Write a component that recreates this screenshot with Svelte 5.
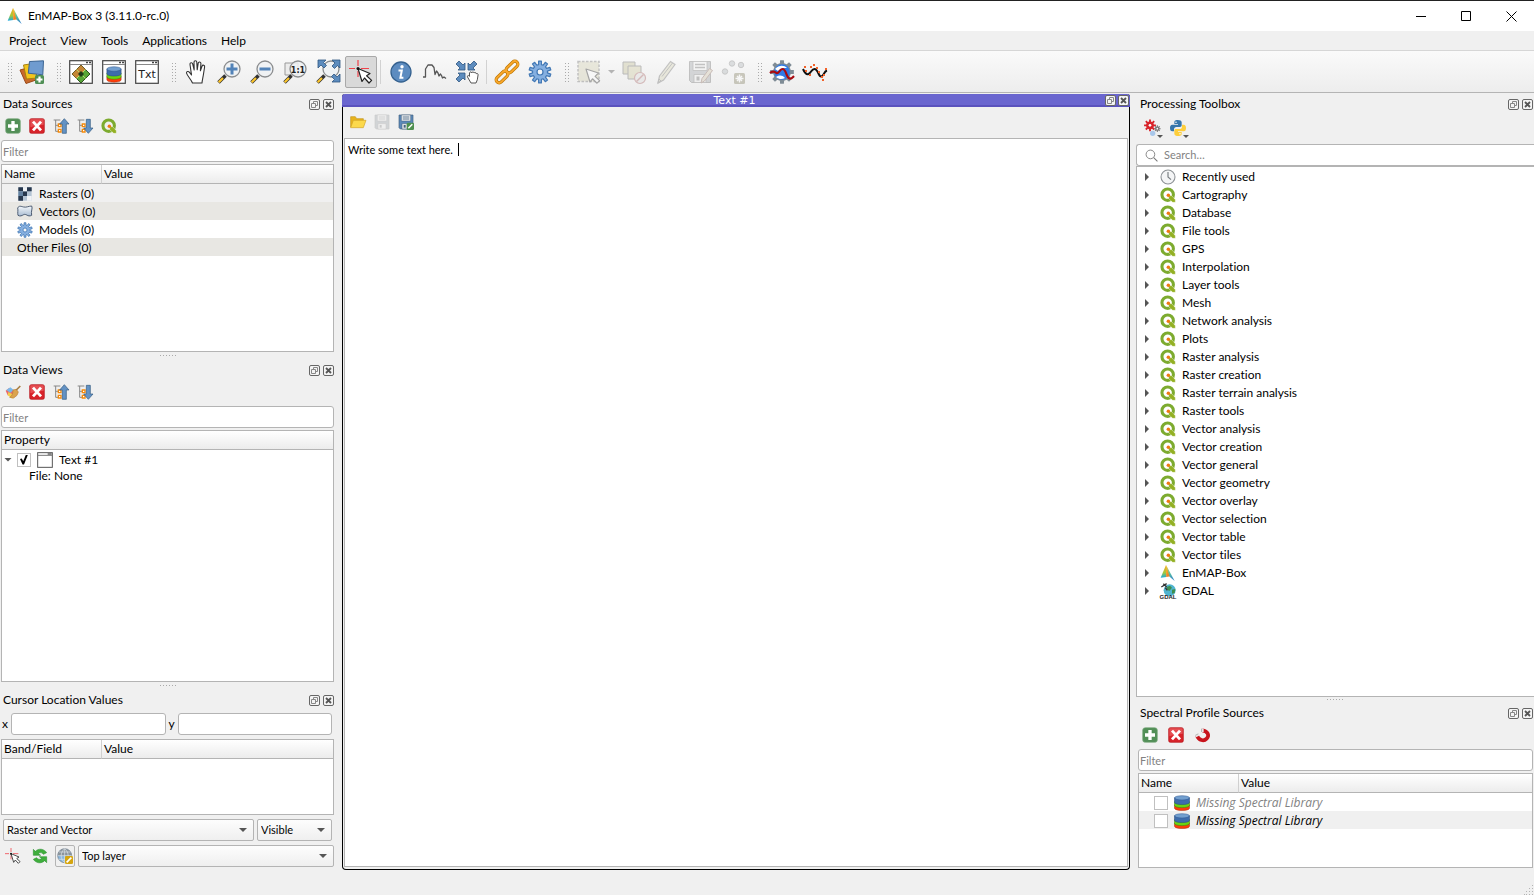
<script lang="ts">
  type Tool = { icon: string; label: string; disabled?: boolean; active?: boolean; menu?: boolean };

  const menus = ['Project', 'View', 'Tools', 'Applications', 'Help'];

  const toolbars: Tool[][][] = [
    [[{ icon: 'layers', label: 'Add data source' }]],
    [[
      { icon: 'winMap', label: 'Open map window' },
      { icon: 'winSpec', label: 'Open spectral library window' },
      { icon: 'winText', label: 'Open text window' },
    ]],
    [
      [
        { icon: 'hand', label: 'Pan' },
        { icon: 'zoomIn', label: 'Zoom in' },
        { icon: 'zoomOut', label: 'Zoom out' },
        { icon: 'zoomNative', label: 'Zoom to native resolution' },
        { icon: 'zoomFull', label: 'Zoom full' },
        { icon: 'cross', label: 'Identify cursor location', active: true },
      ],
      [
        { icon: 'info', label: 'Identify' },
        { icon: 'profile', label: 'Spectral profile' },
        { icon: 'center', label: 'Center map' },
      ],
      [
        { icon: 'link', label: 'Link maps' },
        { icon: 'gear', label: 'Settings' },
      ],
    ],
    [[
      { icon: 'select', label: 'Select features', disabled: true, menu: true },
      { icon: 'deselect', label: 'Deselect features', disabled: true },
      { icon: 'pencil', label: 'Toggle editing', disabled: true },
      { icon: 'saveEdits', label: 'Save edits', disabled: true },
      { icon: 'addPoint', label: 'Add feature', disabled: true },
    ]],
    [[
      { icon: 'specGear', label: 'Classification workflow' },
      { icon: 'specPoints', label: 'Spectral resampling' },
    ]],
  ];

  const sources = [
    { icon: 'raster', label: 'Rasters (0)' },
    { icon: 'vector', label: 'Vectors (0)' },
    { icon: 'gear', label: 'Models (0)' },
    { icon: '', label: 'Other Files (0)' },
  ];

  const groups = [
    'Recently used', 'Cartography', 'Database', 'File tools', 'GPS', 'Interpolation', 'Layer tools', 'Mesh',
    'Network analysis', 'Plots', 'Raster analysis', 'Raster creation', 'Raster terrain analysis', 'Raster tools',
    'Vector analysis', 'Vector creation', 'Vector general', 'Vector geometry', 'Vector overlay',
    'Vector selection', 'Vector table', 'Vector tiles', 'EnMAP-Box', 'GDAL',
  ];
  const groupIcons: Record<string, string> = { 'Recently used': 'clock', 'EnMAP-Box': 'logo', GDAL: 'gdal' };

  const libraries = [
    { label: 'Missing Spectral Library', muted: true },
    { label: 'Missing Spectral Library', muted: false },
  ];

  let content = $state('Write some text here. ');
  let visible = $state(true);

  // closed outline of a cog wheel
  function cog(cx: number, cy: number, outer: number, inner: number, teeth: number) {
    const step = (Math.PI * 2) / teeth;
    const pts: string[] = [];
    for (let i = 0; i < teeth; i++) {
      const a = i * step - Math.PI / 2;
      for (const [r, d] of [[inner, -0.3], [outer, -0.2], [outer, 0.2], [inner, 0.3]]) {
        pts.push(`${(cx + r * Math.cos(a + d * step)).toFixed(2)},${(cy + r * Math.sin(a + d * step)).toFixed(2)}`);
      }
    }
    return `M${pts.join('L')}Z`;
  }
</script>

{#snippet cylinder()}
  <path d="M4.500 14.500v4c0 4 15 4 15 0v-4z" fill="#ff3c0a" stroke="#a83010" stroke-width=".6" />
  <path d="M4.500 10v4.800c0 4 15 4 15 0v-4.800z" fill="#6bd410" stroke="#3c8010" stroke-width=".6" />
  <path d="M4.500 5v5.800c0 4 15 4 15 0v-5.800z" fill="#3d6cac" stroke="#284b7c" stroke-width=".6" />
  <ellipse cx="12" cy="5" rx="7.500" ry="2.800" fill="#729fcf" stroke="#315a92" stroke-width=".6" />
{/snippet}

{#snippet win()}
  <rect x=".7" y=".7" width="22.600" height="22.600" fill="#fff" stroke="#444" stroke-width="1.200" />
  <path d="M1 4.500h22" stroke="#888" />
  <path d="M17 2.500h2M20 2.500h2" stroke="#444" stroke-width="1.500" />
{/snippet}

{#snippet lens()}
  <path d="M8.500 15.500L1.500 22.500" stroke="#333" stroke-width="3.600" />
  <path d="M6 18L1.700 22.300" stroke="#fcc52b" stroke-width="2.200" />
  <circle cx="15" cy="9" r="8" fill="#eef1f3" fill-opacity=".85" stroke="#8b8d8f" stroke-width="1.300" />
{/snippet}

{#snippet pointer()}
  <path d="M9 9l4 13 2.500-3.200 4.500 4.400 2.600-2.600-4.500-4.200L21.500 13z" fill="#fff" stroke="#333" stroke-width="1.200" stroke-linejoin="round" />
{/snippet}

{#snippet floppy(body: string, dark: string)}
  <path d="M1.500 1.500h21v21h-19l-2-2z" fill={body} stroke={dark} />
  <path d="M5 1.500h14v9H5z" fill="#f2f2f2" stroke={dark} stroke-width=".8" />
  <path d="M7 4.500h10M7 7.500h10" stroke={dark} stroke-width="1.300" />
  <path d="M6 14.500h12v8H6z" fill="#ececec" stroke={dark} stroke-width=".8" />
  <path d="M8.500 16.500h3v4h-3z" fill={dark} />
{/snippet}

{#snippet tree()}
  <path d="M1 3h10M4 3v17h6M4 11h6" fill="none" stroke="#888" stroke-width="1.500" />
  <path d="M8 9h4v4H8zM8 17h4v4H8z" fill="#fff" stroke="#f58a0b" stroke-width="2" />
{/snippet}

{#snippet icon(name: string, size: number)}
  <svg class="icon" width={size} height={size} viewBox="0 0 24 24" fill="none" aria-hidden="true">
    {#if name === 'logo'}
      <path d="M9 0L1 19l8.500-1z" fill="url(#logoA)" />
      <path d="M9 0l.3 18 6.700-1z" fill="url(#logoB)" />
      <path d="M9 0L22 24l-7.500-6.500z" fill="url(#logoC)" />
    {:else if name === 'layers'}
      <path d="M0 10l11-3 5 13-10 3.500z" fill="#c9692c" stroke="#9a4a18" />
      <path d="M3.500 5l13-2v15l-10 1z" fill="#f3c51c" stroke="#a8820e" />
      <path d="M9.500 1.500L23.500 .8l-.7 14-14.500-1.600z" fill="#6f9bcf" stroke="#3c6593" />
      <rect x="15" y="15" width="9" height="9" rx="1.500" fill="#4f8f55" />
      <path d="M19.500 16.500v6M16.500 19.500h6" stroke="#fff" stroke-width="2.200" />
    {:else if name === 'winMap'}
      {@render win()}
      <path d="M12 5l9 9-9 9-9-9z" fill="#58a637" stroke="#2d5020" />
      <path d="M12 5l4.500 4.500L12 14l-4.500-4.500zM3 14l4.500 4.500L12 14 7.500 9.500z" fill="#e87b35" fill-opacity=".75" />
      <path d="M12 11l3 3-3 3-3-3z" fill="#203b18" />
      <path d="M7.500 9.500l2.500 2.500M16.500 9.500L14 12M7.500 18.500L10 16M16.500 18.500L14 16" stroke="#b9d86c" />
    {:else if name === 'winSpec'}
      {@render win()}
      <g transform="translate(.6 5) scale(.95 .8)">{@render cylinder()}</g>
    {:else if name === 'winText'}
      {@render win()}
      <text x="12" y="17.500" text-anchor="middle" class="glyph txt">Txt</text>
    {:else if name === 'win'}
      <rect x="1" y="1" width="22" height="22" fill="#fff" stroke="#555" stroke-width="1.500" />
      <path d="M1 5h22" stroke="#777" stroke-width="1.500" />
      <path d="M16 3h6" stroke="#555" stroke-width="2" />
    {:else if name === 'hand'}
      <path d="M8.500 23c-1-3-5.500-7.500-6-10-.2-1.600 1.900-2 3-.6l2 2.600L6 4.500c-.3-2 2.200-2.400 2.700-.5l1.500 6L10 2.200c0-2 2.700-2 2.800 0l.4 7.600 1-6.600c.3-1.900 2.800-1.500 2.700.3l-.5 7.300 1.600-4.600c.7-1.800 3-1 2.600.8L19.500 14c-.4 3-1.200 5.500-1.500 9z" fill="#fff" stroke="#333" stroke-width="1.100" stroke-linejoin="round" />
    {:else if name === 'zoomIn'}
      {@render lens()}
      <path d="M15 3.500v11M9.500 9h11" stroke="#5383b8" stroke-width="3" />
    {:else if name === 'zoomOut'}
      {@render lens()}
      <path d="M9.500 9h11" stroke="#5383b8" stroke-width="3" />
    {:else if name === 'zoomNative'}
      <path d="M2 3h13v12H2z" fill="#ececec" stroke="#999" />
      {@render lens()}
      <text x="15" y="12.500" text-anchor="middle" class="glyph ratio">1:1</text>
    {:else if name === 'zoomFull'}
      {@render lens()}
      <path d="M2 0h8L7.500 2.500l3 3-2.500 2.500-3-3L2 8zM24 0v8l-2.500-2.500-3 3L16 6l3-3-3-3zM24 22h-8l2.500-2.500-3-3L18 14l3 3 3-3z" fill="#5d8cbe" stroke="#2f5680" stroke-width=".8" />
    {:else if name === 'cross'}
      <path d="M9 0v6M9 11v6M0 8.500h6M12 8.500h8" stroke="#f0444c" stroke-width="1.200" />
      <path d="M9 8.500l4 13 2.500-3.500 4.500 5 2.600-2.600-5-4.600 3.400-2.300z" fill="#fff" stroke="#222" stroke-width="1.200" stroke-linejoin="round" />
      <circle cx="9" cy="8.500" r="1.500" fill="#111" />
    {:else if name === 'info'}
      <circle cx="12" cy="12" r="10" fill="#5d8cc0" stroke="#34618f" stroke-width="1.300" />
      <circle cx="13" cy="6.800" r="1.700" fill="#fff" />
      <path d="M9.500 10.500h3.300l-1.400 7.300h3" stroke="#fff" stroke-width="2" />
    {:else if name === 'profile'}
      <path d="M1 17h2.500V9L6 5h4l2 2.500 1 7 1.500-3.500 1.500 2 1 3 1.500-2 1 1.500 1 2.500 1.500-1 2 1.500" stroke="#555" stroke-width="1.300" stroke-linejoin="round" />
    {:else if name === 'center'}
      <path d="M10 10H3l2-2-4-4 3-3 4 4 2-2zM13 10V3l2 2 4-4 3 3-4 4 2 2zM10 13v7l-2-2-4 4-3-3 4-4-2-2z" fill="#5d8cbe" stroke="#2f5680" stroke-width=".8" />
      <path d="M16 23l-3.500-6c-.5-1.500 1-2 2-.6V13c.3-1.500 2-1.500 2.200 0 .4-1.500 2.200-1.300 2.300 0 .8-1 2.200-.6 2.200.8.8-.7 2-.3 1.900 1l-.8 5L21 23z" fill="#fff" stroke="#555" />
    {:else if name === 'link'}
      <g stroke="#bd7700" stroke-width="3.200">
        <rect x="-7" y="-3" width="14" height="6" rx="3" transform="translate(17 7) rotate(-45)" />
        <rect x="-7" y="-3" width="14" height="6" rx="3" transform="translate(7 17) rotate(-45)" />
      </g>
      <g stroke="#f9a72b" stroke-width="1.800">
        <rect x="-7" y="-3" width="14" height="6" rx="3" transform="translate(17 7) rotate(-45)" />
        <rect x="-7" y="-3" width="14" height="6" rx="3" transform="translate(7 17) rotate(-45)" />
      </g>
    {:else if name === 'gear'}
      <path d={cog(12, 12, 11, 7.5, 10)} fill="#85afe0" stroke="#4278b5" stroke-width="1.200" stroke-linejoin="round" />
      <circle cx="12" cy="12" r="3" fill="#f4f6f8" stroke="#4278b5" stroke-width="1.200" />
    {:else if name === 'select'}
      <path d="M1 1.500h21v20H1z" fill="#d4d1b4" stroke="#777" stroke-width="1.500" stroke-dasharray="2.500 1.500" />
      {@render pointer()}
    {:else if name === 'deselect'}
      <path d="M1 2h12v12H1z" fill="#c4c098" stroke="#666" />
      <path d="M6 6h13v13H6z" fill="#d0cca4" stroke="#666" />
      <circle cx="18" cy="18" r="5.500" fill="#ddd" stroke="#a66" stroke-width="1.200" />
      <path d="M14.500 21.500l7-7" stroke="#a66" stroke-width="1.500" />
    {:else if name === 'pencil'}
      <path d="M3 23l1.500-7L15.500 1.500l4.500 3L8.500 20z" fill="#d8d6b8" stroke="#777" stroke-width="1.200" />
      <path d="M7 16.500L17.500 3M3 23l1-4 2 2z" stroke="#777" />
    {:else if name === 'saveEdits'}
      {@render floppy('#a4a8ac', '#777')}
      <path d="M13 23l1-4.500 7.500-10 3 2L16.500 21z" fill="#d3c9b2" stroke="#8b6b60" />
    {:else if name === 'addPoint'}
      <g fill="#b3b9bc" stroke="#888"><circle cx="4" cy="11.500" r="2.700" /><circle cx="11" cy="3.500" r="2.700" /><circle cx="20" cy="5" r="2.700" /></g>
      <rect x="13" y="13" width="11" height="11" rx="1.500" fill="#8a866a" />
      <path d="M18.500 14.500v8M14.500 18.500h8M16 16l5 5M21 16l-5 5" stroke="#fff" stroke-width="1.400" />
    {:else if name === 'specGear'}
      <path d={cog(12, 12, 12, 9, 8)} fill="#7f8c96" />
      <circle cx="12" cy="12" r="7.800" fill="#2f7be8" />
      <path d="M5 9c4-4 9-4 12-1-4-.5-7 .5-9 3zM6 17c3-2 6-2 9 1-3 1.500-6 1.500-9-1z" fill="#fff" />
      <path d="M0 13c3-3 5-1 6.500 0 2.500 1 3-4 6-4 4 0 3.500 8.500 7 9.500 2 .5 3-1 4.500-2.500" stroke="#a80a10" stroke-width="2.200" />
    {:else if name === 'specPoints'}
      <path d="M0 9c1.500 3.500 3 6 5.500 5 3-1.500 3-5 6-5 3.500 0 4 7.500 6.500 7.500 3 0 2.500-5 6-6" stroke="#111" stroke-width="2" />
      <path d="M1 7h2M2 11h2M6 15h2M7 7h2M10 5h2M13 8h2M15 12h2M18 17h2M19 20h2M20 15h2M22 9h2" stroke="#f2622a" stroke-width="2.200" />
    {:else if name === 'add'}
      <rect x="1" y="1" width="22" height="22" rx="4" fill="#528f57" stroke="#7daa80" />
      <path d="M12 4.500v15M4.500 12h15" stroke="#fff" stroke-width="5" />
    {:else if name === 'remove'}
      <rect x="1" y="1" width="22" height="22" rx="2.500" fill="#d8232a" stroke="#b3151b" />
      <path d="M2 2h20v8c-7 1-13 1-20 4z" fill="#ee6d70" fill-opacity=".6" />
      <path d="M6 5.500l12 13M18 5.500l-12 13" stroke="#fff" stroke-width="4.200" />
    {:else if name === 'collapse'}
      {@render tree()}
      <path d="M17 1l7 8h-4v14h-6V9h-4z" fill="#6392c4" stroke="#31587f" />
    {:else if name === 'expand'}
      {@render tree()}
      <path d="M17 23l-7-8h4V2h6v13h4z" fill="#6392c4" stroke="#31587f" />
    {:else if name === 'qgis'}
      <circle cx="11.500" cy="11.500" r="8.600" stroke="#7dab2f" stroke-width="4.600" />
      <path d="M13 13h4.500l5.500 6v4h-4l-6-5.500z" fill="#93b023" stroke="#fff" stroke-width=".6" />
      <circle cx="12.500" cy="12.500" r="2.600" fill="#ee7913" />
    {:else if name === 'raster'}
      <path d="M2 2h20v20H2z" fill="#b4c4d4" />
      <path d="M2 2h7v6H2zM15 2h7v6h-7zM9 8h6v7H9zM2 15h7v7H2z" fill="#26374d" />
      <path d="M9 2h6v6H9zM15 15h7v7h-7z" fill="#f0f3f6" />
      <path d="M2 8h7v7H2z" fill="#62809f" />
    {:else if name === 'vector'}
      <path d="M1 6c2-4 5-2.500 9-1.500S18 3 22 3c2 4-1.500 7 0 14-6 3-8-3-12-1-3 1.500-5 3-8.500 1C.5 13 2 10 1 6z" fill="url(#vecFill)" stroke="#44546c" stroke-width="1.400" />
    {:else if name === 'broom'}
      <path d="M1 10l5-4 7 3-1 9-8-1z" fill="#ec6a6a" />
      <path d="M2 9l6-4 5 4-5 4z" fill="#79b8ea" />
      <path d="M5 12l9 5-3 5-7-5z" fill="#f2cf4a" />
      <path d="M12 9l5-1 3 4-2 5-5 4-6-1c4-2 5-6 5-11z" fill="#dba34e" stroke="#b98238" />
      <path d="M17 9l6-6" stroke="#a87c3e" stroke-width="2.400" />
    {:else if name === 'folder'}
      <path d="M1 20V4h7l2 3h10v3" fill="#e8b31c" stroke="#c4951a" />
      <path d="M1 20.500L5 9.500h19l-4 11z" fill="#fcd94c" stroke="#d2a527" />
    {:else if name === 'save'}
      {@render floppy('#9aa1a8', '#888')}
    {:else if name === 'saveAs'}
      {@render floppy('#5b88b8', '#44617f')}
      <rect x="13" y="13" width="11" height="11" rx="2" fill="#4f9050" />
      <path d="M15.500 21.500l6-6" stroke="#fff" stroke-width="2.200" />
    {:else if name === 'gears'}
      <path d={cog(9, 8, 9, 6, 8)} fill="#d8232a" />
      <circle cx="9" cy="8" r="2" fill="#fff" />
      <path d={cog(20, 13, 5, 3.4, 8)} fill="#777" />
      <circle cx="20" cy="13" r="1.300" fill="#fff" />
      <circle cx="13" cy="20" r="4" fill="#a9c7ea" />
    {:else if name === 'python'}
      <path d="M11.500 0C7 0 6.500 2 6.500 3.500V6H12v1H3.500C1 7 0 9 0 12s1 5 3.500 5H6v-3c0-2 1.500-3.500 3.500-3.500H15c1.500 0 2.500-1 2.500-2.500V3.500C17.500 1 15 0 11.500 0z" fill="#3776ab" />
      <path d="M12.500 24c4.500 0 5-2 5-3.500V18H12v-1h8.500c2.500 0 3.500-2 3.500-5s-1-5-3.500-5H18v3c0 2-1.500 3.500-3.500 3.500H9c-1.500 0-2.500 1-2.500 2.500v4.500c0 2.500 2.500 3.500 6 3.500z" fill="#fdce3c" />
      <circle cx="9" cy="3.500" r="1.100" fill="#fff" />
      <circle cx="15" cy="20.500" r="1.100" fill="#fff" />
    {:else if name === 'clock'}
      <circle cx="12" cy="12" r="10.500" fill="#f4f5f6" stroke="#8d9296" stroke-width="1.600" />
      <path d="M12 4.500V12l4.500 4" stroke="#777c80" stroke-width="1.700" />
    {:else if name === 'gdal'}
      <circle cx="14.500" cy="11" r="9" fill="#4fb3cf" />
      <path d="M10 6l5-2 3 3-4 5-3-2zM18 10l5-1-1 6-4 1z" fill="#3e8f4e" />
      <path d="M2 6l8-5M5 1l5 5M8 7l3 4" stroke="#333" stroke-width="2" />
      <text x="12" y="23.500" text-anchor="middle" class="glyph gdal">GDAL</text>
    {:else if name === 'library'}
      <g transform="translate(-6 -1.500) scale(1.500 1.150)">{@render cylinder()}</g>
    {:else if name === 'magnet'}
      <path d="M4.500 13c3 7 10 9 14.500 4.500S21 6 12.500 5" stroke="#c8141c" stroke-width="5.500" />
      <path d="M13 2.500v5M2.500 14l5-2.500" stroke="#e8e8e8" stroke-width="3" />
      <path d="M11.300 2.500v5M2 12.500l4.500-2.300" stroke="#999" />
    {:else if name === 'reload'}
      <path d="M2 11V2l3 3c5-5 13-4 17 2l-5 2.500c-2-3-5-3.500-7.500-1L13 11z" fill="#3fae3c" stroke="#218a25" stroke-width=".8" />
      <path d="M22 13v9l-3-3c-5 5-13 4-17-2l5-2.500c2 3 5 3.500 7.500 1L11 13z" fill="#3fae3c" stroke="#218a25" stroke-width=".8" />
    {:else if name === 'globe'}
      <circle cx="11.500" cy="11.500" r="10.500" fill="#8ab6dc" stroke="#6b7680" />
      <path d="M1 11.500a10.500 10.500 0 0 1 21 0z" fill="#8b949c" />
      <path d="M1 11.500h21M3 6h17M3 17h17M11.500 1v21M11.500 1c-7 6-7 15 0 21M11.500 1c7 6 7 15 0 21" stroke="#dfe6ec" />
      <rect x="12" y="12" width="12" height="12" rx="2" fill="#d5a510" />
      <path d="M14.500 21.500l7-7" stroke="#fff" stroke-width="2.500" />
    {:else if name === 'search'}
      <circle cx="10" cy="10" r="8" stroke="#777" stroke-width="1.600" />
      <path d="M16 16l7 7" stroke="#777" stroke-width="2" />
    {/if}
  </svg>
{/snippet}

{#snippet dockButtons()}
  <button class="dock-button" aria-label="Float">
    <svg width="11" height="11" viewBox="0 0 11 11" fill="none" stroke="#666">
      <rect x=".5" y=".5" width="10" height="10" rx="1.500" fill="#f4f4f4" />
      <path d="M4.500 4.500v-2h4v4h-2M2.500 4.500h4v4h-4z" stroke="#888" />
    </svg>
  </button>
  <button class="dock-button" aria-label="Close">
    <svg width="11" height="11" viewBox="0 0 11 11" fill="none" stroke="#666">
      <rect x=".5" y=".5" width="10" height="10" rx="1.500" fill="#f4f4f4" />
      <path d="M3 3l5 5M8 3L3 8" stroke="#555" stroke-width="1.800" />
    </svg>
  </button>
{/snippet}

{#snippet dockTitle(title: string)}
  <header class="dock-title">
    <h2>{title}</h2>
    {@render dockButtons()}
  </header>
{/snippet}

{#snippet smallTool(name: string, label: string, disabled = false)}
  <button class="small-tool" aria-label={label} {disabled}>{@render icon(name, 16)}</button>
{/snippet}

<svg class="defs" width="0" height="0" aria-hidden="true">
  <defs>
    <linearGradient id="logoA" x1="0" y1="0" x2="0" y2="1"><stop offset="0" stop-color="#f7a823" /><stop offset=".6" stop-color="#a3c93a" /><stop offset="1" stop-color="#18a9e0" /></linearGradient>
    <linearGradient id="logoB" x1="0" y1="0" x2="0" y2="1"><stop offset="0" stop-color="#f7c81f" /><stop offset="1" stop-color="#f07a24" /></linearGradient>
    <linearGradient id="logoC" x1="0" y1="0" x2="0" y2="1"><stop offset="0" stop-color="#f6c72c" /><stop offset=".5" stop-color="#5cc3a0" /><stop offset="1" stop-color="#2878d0" /></linearGradient>
    <linearGradient id="vecFill" x1="0" y1="0" x2="0" y2="1"><stop offset="0" stop-color="#f5f8fb" /><stop offset="1" stop-color="#a9bdd3" /></linearGradient>
  </defs>
</svg>

<div class="window">
  <header class="titlebar">
    {@render icon('logo', 16)}
    <h1>EnMAP-Box 3 (3.11.0-rc.0)</h1>
    <div class="window-buttons">
      <button aria-label="Minimize"><svg width="11" height="11"><path d="M0 5.500h10" stroke="#000" /></svg></button>
      <button aria-label="Maximize"><svg width="11" height="11"><path d="M.5 .5h9v9h-9z" fill="none" stroke="#000" /></svg></button>
      <button aria-label="Close"><svg width="11" height="11"><path d="M.5 .5l10 10M10.500 .5l-10 10" stroke="#000" /></svg></button>
    </div>
  </header>

  <nav class="menubar">
    {#each menus as item}
      <button>{item}</button>
    {/each}
  </nav>

  <div class="toolbar" role="toolbar" aria-label="Main">
    {#each toolbars as bar}
      <span class="handle"></span>
      {#each bar as section, i}
        {#if i > 0}<span class="separator"></span>{/if}
        {#each section as tool}
          <button class="tool" class:active={tool.active} disabled={tool.disabled} aria-label={tool.label}>
            {@render icon(tool.icon, 24)}
          </button>
          {#if tool.menu}<button class="tool-menu" aria-label="More" disabled><span class="arrow"></span></button>{/if}
        {/each}
      {/each}
    {/each}
  </div>

  <main>
    <aside class="left">
      <section class="dock sources">
        {@render dockTitle('Data Sources')}
        <div class="dock-tools">
          {@render smallTool('add', 'Add data source')}
          {@render smallTool('remove', 'Remove data source')}
          {@render smallTool('collapse', 'Collapse tree')}
          {@render smallTool('expand', 'Expand tree')}
          {@render smallTool('qgis', 'Synchronize with QGIS')}
        </div>
        <input class="filter" type="text" placeholder="Filter" aria-label="Filter data sources" />
        <div class="view">
          <table>
            <colgroup><col class="name-col" /><col /></colgroup>
            <thead><tr><th>Name</th><th>Value</th></tr></thead>
            <tbody class="striped">
              {#each sources as source}
                <tr>
                  <td colspan="2">
                    <div class="cell indent">
                      {#if source.icon}{@render icon(source.icon, 16)}{/if}
                      <span>{source.label}</span>
                    </div>
                  </td>
                </tr>
              {/each}
            </tbody>
          </table>
        </div>
      </section>

      <div class="splitter"></div>

      <section class="dock views">
        {@render dockTitle('Data Views')}
        <div class="dock-tools">
          {@render smallTool('broom', 'Style')}
          {@render smallTool('remove', 'Remove view')}
          {@render smallTool('collapse', 'Collapse tree')}
          {@render smallTool('expand', 'Expand tree')}
        </div>
        <input class="filter" type="text" placeholder="Filter" aria-label="Filter data views" />
        <div class="view">
          <table>
            <thead><tr><th>Property</th></tr></thead>
            <tbody>
              <tr>
                <td>
                  <label class="cell view-row">
                    <span class="arrow"></span>
                    <input type="checkbox" bind:checked={visible} />
                    {@render icon('win', 16)}
                    <span>Text #1</span>
                  </label>
                </td>
              </tr>
              <tr><td><div class="cell child">File: None</div></td></tr>
            </tbody>
          </table>
        </div>
      </section>

      <div class="splitter"></div>

      <section class="dock cursor">
        {@render dockTitle('Cursor Location Values')}
        <div class="coords">
          <label for="coord-x">x</label>
          <input id="coord-x" type="text" />
          <label for="coord-y">y</label>
          <input id="coord-y" type="text" />
        </div>
        <div class="view values">
          <table>
            <colgroup><col class="name-col" /><col /></colgroup>
            <thead><tr><th>Band/Field</th><th>Value</th></tr></thead>
          </table>
        </div>
        <div class="combos">
          <span class="combo wide">
            <select aria-label="Layer types"><option>Raster and Vector</option></select>
            <span class="arrow"></span>
          </span>
          <span class="combo narrow">
            <select aria-label="Layer visibility"><option>Visible</option></select>
            <span class="arrow"></span>
          </span>
        </div>
        <div class="combos last">
          {@render smallTool('cross', 'Activate cursor location')}
          {@render smallTool('reload', 'Reload')}
          <button class="small-tool framed" aria-label="Set CRS">{@render icon('globe', 16)}</button>
          <span class="combo wide">
            <select aria-label="Layer order"><option>Top layer</option></select>
            <span class="arrow"></span>
          </span>
        </div>
      </section>
    </aside>

    <section class="document">
      <header class="document-title">
        <h2>Text #1</h2>
        {@render dockButtons()}
      </header>
      <div class="document-tools">
        {@render smallTool('folder', 'Open')}
        {@render smallTool('save', 'Save', true)}
        {@render smallTool('saveAs', 'Save as')}
      </div>
      <div class="editor">
        <textarea aria-label="Text" spellcheck="false" bind:value={content}></textarea>
        <span class="caret"></span>
      </div>
    </section>

    <aside class="right">
      <section class="dock toolbox">
        {@render dockTitle('Processing Toolbox')}
        <div class="dock-tools">
          <button class="small-tool" aria-label="Models">{@render icon('gears', 16)}<span class="badge arrow"></span></button>
          <button class="small-tool" aria-label="Scripts">{@render icon('python', 16)}<span class="badge arrow"></span></button>
        </div>
        <label class="search">
          {@render icon('search', 13)}
          <input type="search" placeholder="Search…" aria-label="Search algorithms" />
        </label>
        <ul class="view groups">
          {#each groups as group}
            <li>
              <button>
                <span class="arrow closed"></span>
                {@render icon(groupIcons[group] ?? 'qgis', 16)}
                <span>{group}</span>
              </button>
            </li>
          {/each}
        </ul>
      </section>

      <div class="splitter"></div>

      <section class="dock spectral">
        {@render dockTitle('Spectral Profile Sources')}
        <div class="dock-tools">
          {@render smallTool('add', 'Add profile source')}
          {@render smallTool('remove', 'Remove profile source')}
          {@render smallTool('magnet', 'Snap')}
        </div>
        <input class="filter" type="text" placeholder="Filter" aria-label="Filter profile sources" />
        <div class="view libraries">
          <table>
            <colgroup><col class="name-col" /><col /></colgroup>
            <thead><tr><th>Name</th><th>Value</th></tr></thead>
            <tbody>
              {#each libraries as library}
                <tr>
                  <td colspan="2">
                    <label class="cell indent" class:muted={library.muted}>
                      <input type="checkbox" />
                      {@render icon('library', 16)}
                      <em>{library.label}</em>
                    </label>
                  </td>
                </tr>
              {/each}
            </tbody>
          </table>
        </div>
      </section>
    </aside>
  </main>

  <footer class="statusbar">
    <svg width="10" height="10" fill="#b4b4b4" aria-hidden="true">
      <path d="M8 0h1v1h-1zM5 3h1v1h-1zM8 3h1v1h-1zM2 6h1v1h-1zM5 6h1v1h-1zM8 6h1v1h-1zM0 9h1v1h-1zM2 9h1v1h-1zM5 9h1v1h-1zM8 9h1v1h-1z" />
    </svg>
  </footer>
</div>

<style>
  :global(body) {
    margin: 0;
    background: #f0f0f0;
  }
  .window {
    --border: #b4b4b4;
    display: flex;
    flex-direction: column;
    box-sizing: border-box;
    min-height: 100vh;
    border-top: 1px solid #222;
    background: #f0f0f0;
    color: #000;
    font: 12px/18px Lato, 'Open Sans', sans-serif;
    font-variant-ligatures: none;
  }
  .window :global(*) {
    box-sizing: border-box;
  }
  .defs {
    position: absolute;
  }
  h1, h2 {
    flex: 1;
    margin: 0;
    font-size: inherit;
    font-weight: 400;
  }
  button, input, select, textarea {
    margin: 0;
    padding: 0;
    border: 0;
    border-radius: 0;
    background: none;
    color: inherit;
    font: inherit;
    font-variant-ligatures: none;
    outline: none;
  }
  button {
    display: flex;
    align-items: center;
    justify-content: center;
  }
  em {
    font-family: 'Open Sans', sans-serif;
  }
  .icon {
    display: block;
    flex-shrink: 0;
    overflow: visible;
  }
  .glyph {
    fill: #222;
    font-family: 'DejaVu Sans', sans-serif;
  }
  .txt { font-size: 11px; }
  .ratio { font-size: 8px; font-weight: 700; }
  .gdal { font: 700 9px 'Liberation Sans', sans-serif; }

  .arrow {
    flex-shrink: 0;
    width: 8px;
    height: 4px;
    background: #555;
    clip-path: polygon(0 0, 100% 0, 50% 100%);
  }
  .arrow.closed {
    width: 4px;
    height: 8px;
    clip-path: polygon(0 0, 100% 50%, 0 100%);
  }

  .titlebar {
    display: flex;
    align-items: center;
    gap: 5px;
    height: 30px;
    padding-left: 7px;
    background: #fff;
  }
  .window-buttons {
    display: flex;
    align-items: center;
  }
  .window-buttons button {
    width: 45px;
    height: 28px;
  }
  .menubar {
    display: flex;
    height: 20px;
    padding-left: 2px;
    border-bottom: 1px solid #d6d6d6;
  }
  .menubar button {
    padding: 0 7px;
  }
  .toolbar {
    display: flex;
    align-items: center;
    gap: 1px;
    height: 42px;
    border-bottom: 1px solid var(--border);
    background: linear-gradient(#fafafa, #ededed);
  }
  .handle {
    width: 15px;
    height: 20px;
    border: solid transparent;
    border-width: 0 3px 0 7px;
    background: radial-gradient(circle, #aaa 30%, transparent 40%) 0 0 / 3px 3px padding-box;
  }
  .separator {
    width: 6px;
    height: 24px;
    border: solid transparent;
    border-width: 0 3px 0 2px;
    background: #d2d2d2 padding-box;
  }
  .tool {
    width: 32px;
    height: 32px;
    border: 1px solid transparent;
    border-radius: 2px;
  }
  .tool.active {
    border-color: #a9a9a9;
    background: #d9d9d9;
  }
  .tool:disabled, .tool-menu:disabled {
    opacity: 0.4;
  }
  .tool-menu {
    width: 11px;
    height: 32px;
  }

  main {
    display: grid;
    flex: 1;
    grid-template-columns: 334px minmax(0, 1fr) 398px;
  }
  .left, .right {
    display: flex;
    flex-direction: column;
  }
  .left {
    padding: 0 0 3px 1px;
  }
  .right {
    padding-bottom: 2px;
  }
  .dock {
    display: flex;
    flex-direction: column;
  }
  .sources { flex: 259 1 0; }
  .views { flex: 323 1 0; }
  .toolbox { flex: 1; }
  .spectral {
    padding: 0 1px 0 2px;
  }
  .dock-title {
    display: flex;
    align-items: center;
    gap: 3px;
    height: 22px;
    padding-left: 2px;
  }
  .toolbox .dock-title {
    padding: 0 1px 0 4px;
  }
  .dock-button {
    width: 11px;
    height: 11px;
  }
  .dock-tools {
    display: flex;
    align-items: center;
    height: 22px;
    margin-bottom: 3px;
  }
  .small-tool {
    position: relative;
    width: 24px;
    height: 22px;
  }
  .small-tool:disabled {
    opacity: 0.35;
  }
  .dock-tools .badge {
    position: absolute;
    right: 1px;
    bottom: 1px;
    width: 6px;
    height: 3px;
  }
  .right .dock-tools {
    gap: 2px;
  }
  .toolbox .dock-tools {
    height: 26px;
    padding-left: 4px;
  }
  .filter, .coords input, .search {
    height: 22px;
    border: 1px solid var(--border);
    border-radius: 3px;
    background: #fff;
  }
  .filter {
    margin-bottom: 2px;
    padding: 0 1px;
  }
  .filter, .search input, select, textarea {
    font-size: 11px;
  }
  ::placeholder {
    color: #828282;
    opacity: 1;
  }
  .view {
    flex: 1;
    margin: 0;
    border: 1px solid var(--border);
    background: #fff;
  }
  table {
    width: 100%;
    border-spacing: 0;
    table-layout: fixed;
  }
  .name-col {
    width: 99px;
  }
  th {
    height: 19px;
    padding: 0 2px;
    border-bottom: 1px solid var(--border);
    background: linear-gradient(#fff, #ececec);
    font-weight: 400;
    line-height: 18px;
    text-align: left;
  }
  th + th {
    border-left: 1px solid #d0d0d0;
  }
  td {
    padding: 0;
  }
  .cell {
    display: flex;
    align-items: center;
    gap: 6px;
    height: 18px;
    padding-top: 1px;
  }
  .indent {
    padding-left: 15px;
  }
  .striped tr:nth-child(even) {
    background: #e8e7e3;
  }
  .striped tr:first-child, .libraries tbody tr:nth-child(even) {
    background: #f0f0f0;
  }
  .muted {
    color: #828282;
  }
  input[type='checkbox'] {
    appearance: none;
    display: grid;
    width: 14px;
    height: 14px;
    border: 1px solid #c0c0c0;
    background: #fff;
  }
  input[type='checkbox']:checked::after {
    content: '';
    margin: 1px 2px;
    background: #000;
    clip-path: polygon(0 45%, 22% 40%, 40% 68%, 75% 0, 100% 0, 50% 100%, 32% 100%);
  }
  .view-row {
    height: 19px;
    padding: 0 0 0 2px;
  }
  .view-row input {
    margin-left: -1px;
  }
  .child {
    height: 14px;
    padding: 0 0 0 27px;
  }

  .splitter {
    display: grid;
    place-items: center;
    height: 7px;
  }
  .splitter::after {
    content: '';
    width: 18px;
    height: 3px;
    background: radial-gradient(circle, #aaa 30%, transparent 40%) 0 0 / 3px 3px;
  }
  .right .splitter {
    height: 5px;
  }

  .coords {
    display: flex;
    align-items: center;
    gap: 2px;
    margin: 2px 2px 4px 0;
  }
  .coords label {
    width: 8px;
    text-align: center;
  }
  .coords input {
    flex: 1;
    min-width: 0;
  }
  .values {
    flex: none;
    height: 76px;
  }
  .combos {
    display: flex;
    gap: 3px;
    margin: 4px 2px 0;
  }
  .combos.last {
    margin: 4px 0 0;
  }
  .combo {
    position: relative;
  }
  .combo.wide { flex: 1; }
  .combo.narrow { width: 75px; }
  .combo select {
    appearance: none;
    display: block;
    width: 100%;
    height: 22px;
    padding: 0 3px;
    border: 1px solid var(--border);
    border-radius: 2px;
    background: linear-gradient(#fdfdfd, #efefef);
  }
  .combo .arrow {
    position: absolute;
    top: 9px;
    right: 7px;
    pointer-events: none;
  }
  .framed {
    width: 20px;
    border: 1px solid var(--border);
    border-radius: 2px;
  }

  .document {
    display: flex;
    flex-direction: column;
    margin: 1px 6px 0 8px;
    border: 1px solid #000;
    border-top: 0;
    border-radius: 3px 3px 4px 4px;
  }
  .document-title {
    display: flex;
    align-items: center;
    gap: 2px;
    height: 13px;
    margin: 0 -1px;
    padding: 0 1px 0 24px;
    border-radius: 3px 3px 0 0;
    background: linear-gradient(#6a66cf 11px, #5a52bd 11px);
    color: #fff;
    font: 11px/13px 'DejaVu Sans', sans-serif;
    text-align: center;
  }
  .document-tools {
    display: flex;
    height: 31px;
    padding: 4px 3px 0;
  }
  .editor {
    position: relative;
    display: grid;
    flex: 1;
    margin: 0 1px 2px;
    border: 1px solid var(--border);
    background: #fff;
  }
  textarea {
    padding: 2px 3px;
    resize: none;
  }
  .caret {
    position: absolute;
    top: 4px;
    left: 113px;
    width: 1px;
    height: 13px;
    background: #000;
  }

  .search {
    display: flex;
    align-items: center;
    gap: 6px;
    padding-left: 8px;
    border-right: 0;
    border-radius: 3px 0 0 3px;
  }
  .search input {
    flex: 1;
  }
  .groups {
    padding: 1px 0;
    border-right: 0;
    list-style: none;
  }
  .groups button {
    gap: 6px;
    height: 18px;
    padding-left: 8px;
  }
  .groups .arrow {
    margin-right: 5px;
  }
  .libraries {
    flex: none;
    height: 95px;
  }

  .statusbar {
    display: flex;
    align-items: flex-end;
    justify-content: flex-end;
    height: 25px;
  }
</style>
